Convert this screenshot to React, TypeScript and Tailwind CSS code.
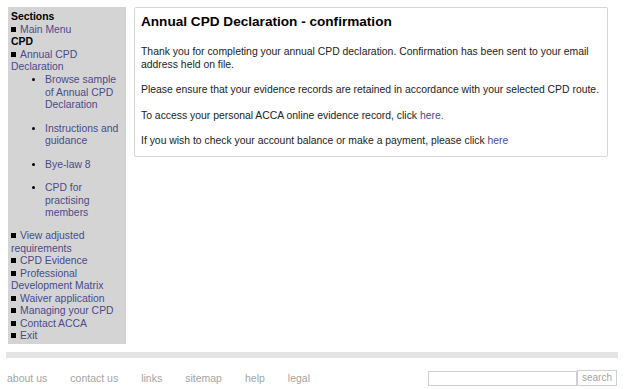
import React from 'react';

const sq = <span className="inline-block w-[5px] h-[5px] bg-black mr-[4px] mb-[1px]" />;

const NavLink: React.FC<{ children: React.ReactNode }> = ({ children }) => (
  <div>
    {sq}
    <a className="text-[#4b4b8c]">{children}</a>
  </div>
);

const subItems = ['Browse sample of Annual CPD Declaration', 'Instructions and guidance', 'Bye-law 8', 'CPD for practising members'];

const App: React.FC = () => {
  return (
    <div className="w-[632px] h-[389px] bg-white text-[10.4px] leading-[12.5px] text-[#222]" style={{ fontFamily: '"Liberation Sans", Arial, sans-serif' }}>
      <div className="flex items-start pt-[7px]">
        {/* Sidebar */}
        <div className="ml-[8px] w-[118px] h-[337px] bg-[#d4d4d4] px-[3px] pt-[4px]">
          <div className="font-bold text-black">Sections</div>
          <NavLink>Main Menu</NavLink>
          <div className="font-bold text-black">CPD</div>
          <NavLink>Annual CPD Declaration</NavLink>
          <ul className="list-disc pl-[34px] mt-[0.5px] mb-[10.5px]">
            {subItems.map((s) => (
              <li key={s} className="mb-[11px] last:mb-0 marker:text-black text-[#4b4b8c]">
                {s}
              </li>
            ))}
          </ul>
          <NavLink>View adjusted requirements</NavLink>
          <NavLink>CPD Evidence</NavLink>
          <NavLink>Professional Development Matrix</NavLink>
          <NavLink>Waiver application</NavLink>
          <NavLink>Managing your CPD</NavLink>
          <NavLink>Contact ACCA</NavLink>
          <NavLink>Exit</NavLink>
        </div>

        {/* Content */}
        <div className="ml-[8px] w-[474px] border border-[#d6d6d6] rounded-[2px] px-[6px] pt-[5px] pb-[8px]">
          <h1 className="text-[13.6px] leading-[18px] font-bold text-black mb-[15px]">Annual CPD Declaration - confirmation</h1>
          <p className="mb-[13px]">
            Thank you for completing your annual CPD declaration. Confirmation has been sent to your email address held on file.
          </p>
          <p className="mb-[13px]">Please ensure that your evidence records are retained in accordance with your selected CPD route.</p>
          <p className="mb-[13px]">
            To access your personal ACCA online evidence record, click <a className="text-[#4b4b8c]">here.</a>
          </p>
          <p>
            If you wish to check your account balance or make a payment, please click <a className="text-[#4b4b8c]">here</a>
          </p>
        </div>
      </div>

      {/* Footer */}
      <div className="mt-[8px] ml-[6px] w-[612px] h-[6px] bg-[#e4e4e4]" />
      <div className="flex items-center justify-between ml-[7px] w-[610px] mt-[12px] text-[#a4a4a4] text-[10.5px]">
        <div className="flex gap-[23px]">
          <a>about us</a>
          <a>contact us</a>
          <a>links</a>
          <a>sitemap</a>
          <a>help</a>
          <a>legal</a>
        </div>
        <div className="flex items-center">
          <input className="w-[149px] h-[15px] border border-[#cfcfcf] bg-white" />
          <button className="h-[16px] px-[4px] border border-[#cfcfcf] text-[#a4a4a4] text-[10px] leading-[12px] bg-white">search</button>
        </div>
      </div>
    </div>
  );
};

export default App;
